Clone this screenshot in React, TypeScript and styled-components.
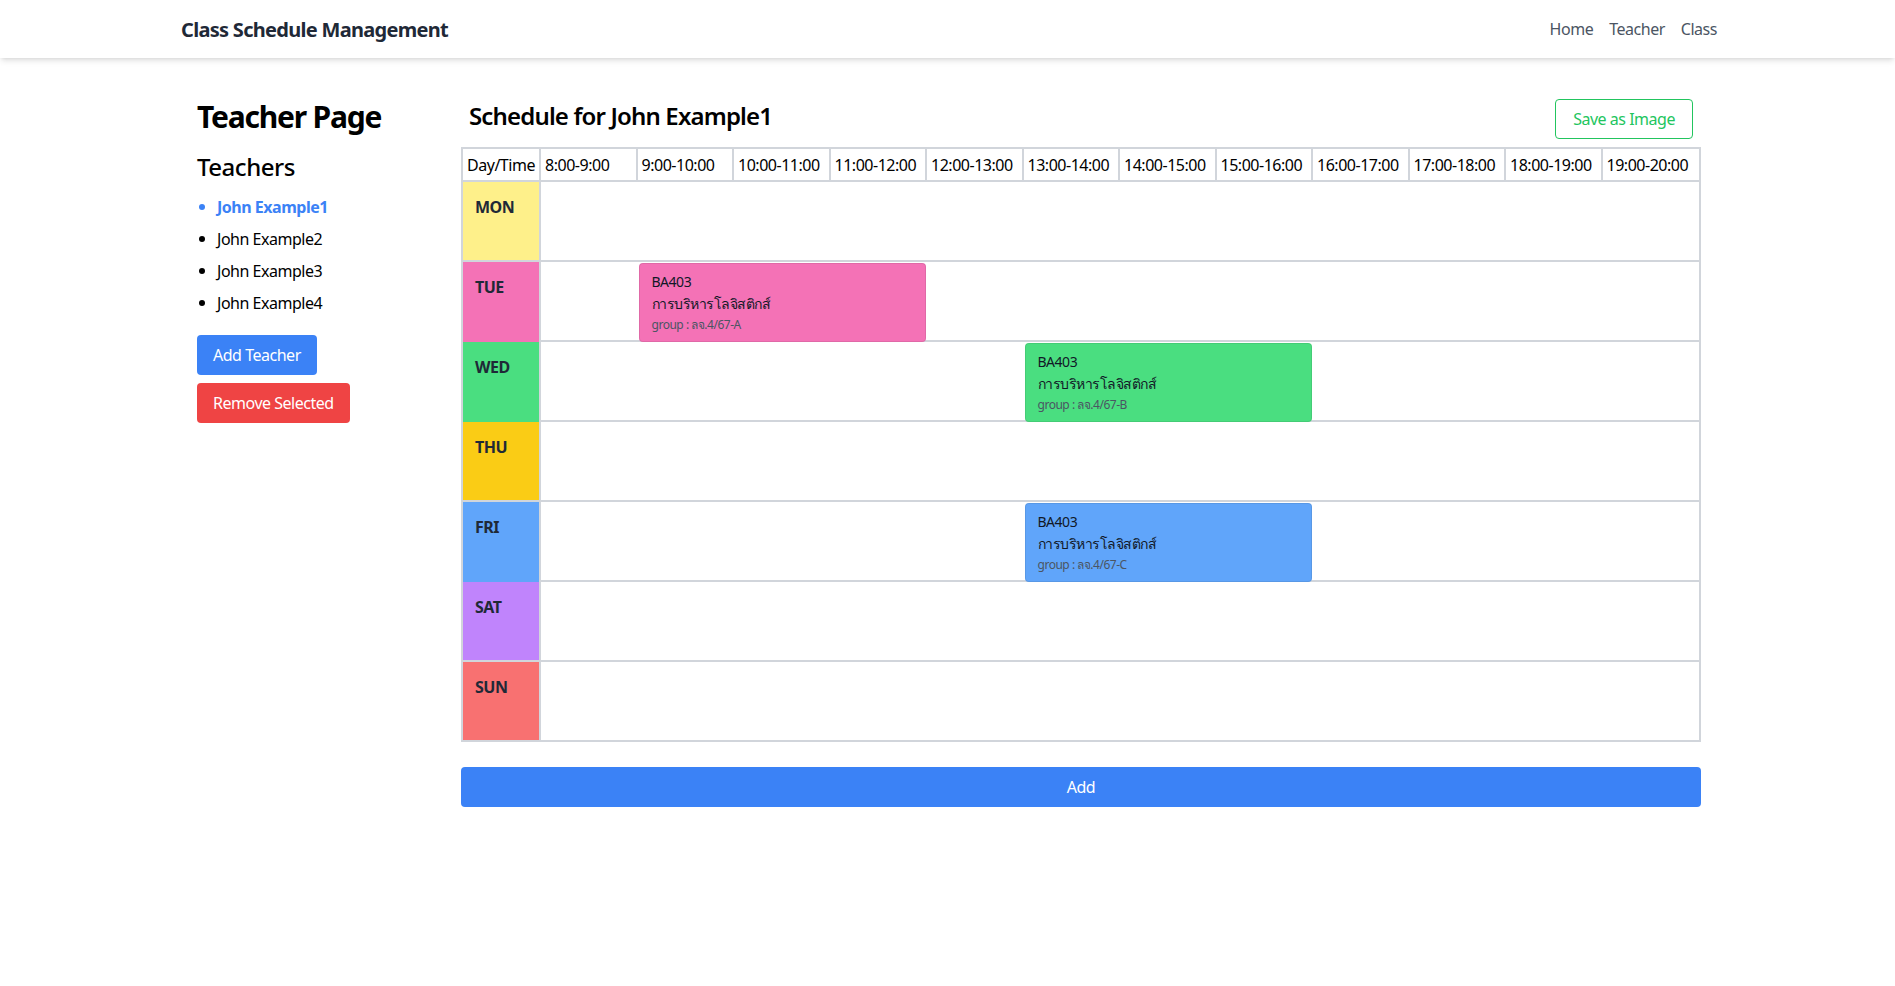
import styled, { createGlobalStyle } from "styled-components";

const GlobalStyle = createGlobalStyle`
  * { box-sizing: border-box; }
  body {
    margin: 0;
    padding-left: 3px;
    background: #ffffff;
    color: #000000;
    font-family: "Noto Sans", "Open Sans", "DejaVu Sans", sans-serif;
    letter-spacing: -0.03em;
  }
`

const Navbar = styled.header`
  margin-left: -3px;
  padding-left: 3px;
  background: #ffffff;
  box-shadow: 0 4px 6px -1px rgba(0, 0, 0, 0.1), 0 2px 4px -2px rgba(0, 0, 0, 0.1);
`

const NavInner = styled.div`
  max-width: 1536px;
  height: 58px;
  margin: 0 auto;
  display: flex;
  align-items: center;
  justify-content: space-between;
`

const Brand = styled.div`
  font-size: 20px;
  font-weight: 700;
  letter-spacing: -0.035em;
  color: #1f2937;
`

const NavLinks = styled.nav`
  display: flex;
  gap: 16px;
`

const NavLink = styled.a`
  font-size: 16px;
  color: #4b5563;
  text-decoration: none;
  cursor: pointer;
`

const Page = styled.main`
  max-width: 1536px;
  margin: 0 auto;
  padding: 41px 16px;
  display: flex;
`

const Sidebar = styled.aside`
  width: 264px;
  flex-shrink: 0;
`

const PageTitle = styled.h1`
  margin: 0 0 16px;
  font-size: 30px;
  line-height: 36px;
  font-weight: 700;
  letter-spacing: -0.04em;
`

const SectionTitle = styled.h2`
  margin: 0 0 8px;
  font-size: 24px;
  line-height: 32px;
  font-weight: 500;
`

const TeacherList = styled.ul`
  list-style: none;
  margin: 0 0 16px;
  padding: 0;
`

const TeacherItem = styled.li<{ $active?: boolean }>`
  display: flex;
  align-items: center;
  gap: 12px;
  padding: 4px 0 4px 2px;
  font-size: 16px;
  line-height: 24px;
  cursor: pointer;
  color: ${(p) => (p.$active ? "#3b82f6" : "#000000")};
  font-weight: ${(p) => (p.$active ? 700 : 400)};

  &::before {
    content: "";
    width: 6px;
    height: 6px;
    border-radius: 50%;
    background: currentColor;
  }
`

const ButtonStack = styled.div`
  display: flex;
  flex-direction: column;
  align-items: flex-start;
  gap: 8px;
`

const Button = styled.button<{ $color: string }>`
  border: none;
  border-radius: 4px;
  padding: 8px 16px;
  font-family: inherit;
  letter-spacing: inherit;
  font-size: 16px;
  line-height: 24px;
  color: #ffffff;
  background: ${(p) => p.$color};
  cursor: pointer;
`

const Main = styled.section`
  flex: 1;
  min-width: 0;
`

const MainHeader = styled.div`
  display: flex;
  align-items: center;
  justify-content: space-between;
  padding: 0 8px;
  margin-bottom: 8px;
`

const ScheduleTitle = styled.h2`
  margin: 0;
  padding-bottom: 6px;
  font-size: 24px;
  line-height: 32px;
  font-weight: 600;
  letter-spacing: -0.035em;
`

const OutlineButton = styled.button`
  background: #ffffff;
  border: 1px solid #22c55e;
  border-radius: 4px;
  padding: 7px 17px;
  font-family: inherit;
  letter-spacing: inherit;
  font-size: 16px;
  line-height: 24px;
  color: #22c55e;
  cursor: pointer;
`

const Table = styled.div`
  border: 2px solid #d1d5db;
`

const Row = styled.div<{ $header?: boolean }>`
  display: grid;
  grid-template-columns: 78px repeat(12, 1fr);
  height: ${(p) => (p.$header ? "33px" : "80px")};
  border-bottom: 2px solid #d1d5db;

  &:last-child {
    border-bottom: none;
    height: 78px;
  }
`

const HeadCell = styled.div`
  padding: 4px 4px 3px;
  font-size: 16px;
  line-height: 24px;
  white-space: nowrap;
  overflow: hidden;
  border-right: 2px solid #d1d5db;

  &:last-child {
    border-right: none;
  }
`

const DayCell = styled.div<{ $bg: string }>`
  grid-column: 1;
  background: ${(p) => p.$bg};
  border-right: 2px solid #d1d5db;
  padding: 13px 12px;
  font-size: 16px;
  line-height: 24px;
  font-weight: 700;
  color: #1f2937;
`

const ClassBlock = styled.div<{ $bg: string; $start: number; $span: number }>`
  grid-column: ${(p) => p.$start + 2} / span ${(p) => p.$span};
  grid-row: 1;
  margin: 1px;
  background: ${(p) => p.$bg};
  border: 1px solid rgba(0, 0, 0, 0.08);
  border-radius: 4px;
  padding: 8px 12px;
`

const ClassCode = styled.div`
  font-size: 14px;
  line-height: 20px;
  color: #111827;
`

const ClassName = styled.div`
  margin-top: 2px;
  font-size: 14px;
  line-height: 20px;
  font-weight: 500;
  color: #111827;
`

const ClassGroup = styled.div`
  margin-top: 3px;
  font-size: 12px;
  line-height: 16px;
  color: #4b5563;
`

const AddButton = styled(Button)`
  width: 100%;
  margin-top: 25px;
`

const times = [
  "8:00-9:00", "9:00-10:00", "10:00-11:00", "11:00-12:00", "12:00-13:00", "13:00-14:00",
  "14:00-15:00", "15:00-16:00", "16:00-17:00", "17:00-18:00", "18:00-19:00", "19:00-20:00",
];

const days = [
  { name: "MON", color: "#fef08a" },
  { name: "TUE", color: "#f472b6" },
  { name: "WED", color: "#4ade80" },
  { name: "THU", color: "#facc15" },
  { name: "FRI", color: "#60a5fa" },
  { name: "SAT", color: "#c084fc" },
  { name: "SUN", color: "#f87171" },
];

const classes = [
  { day: "TUE", start: 1, span: 3, code: "BA403", name: "การบริหารโลจิสติกส์", group: "ลจ.4/67-A" },
  { day: "WED", start: 5, span: 3, code: "BA403", name: "การบริหารโลจิสติกส์", group: "ลจ.4/67-B" },
  { day: "FRI", start: 5, span: 3, code: "BA403", name: "การบริหารโลจิสติกส์", group: "ลจ.4/67-C" },
];

const teachers = ["John Example1", "John Example2", "John Example3", "John Example4"];

const App = () => {
  return (
    <>
      <GlobalStyle />
      <Navbar>
        <NavInner>
          <Brand>Class Schedule Management</Brand>
          <NavLinks>
            <NavLink>Home</NavLink>
            <NavLink>Teacher</NavLink>
            <NavLink>Class</NavLink>
          </NavLinks>
        </NavInner>
      </Navbar>

      <Page>
        <Sidebar>
          <PageTitle>Teacher Page</PageTitle>
          <SectionTitle>Teachers</SectionTitle>
          <TeacherList>
            {teachers.map((t, i) => (
              <TeacherItem key={t} $active={i === 0}>{t}</TeacherItem>
            ))}
          </TeacherList>
          <ButtonStack>
            <Button $color="#3b82f6">Add Teacher</Button>
            <Button $color="#ef4444">Remove Selected</Button>
          </ButtonStack>
        </Sidebar>

        <Main>
          <MainHeader>
            <ScheduleTitle>Schedule for John Example1</ScheduleTitle>
            <OutlineButton>Save as Image</OutlineButton>
          </MainHeader>

          <Table>
            <Row $header>
              <HeadCell>Day/Time</HeadCell>
              {times.map((t) => (
                <HeadCell key={t}>{t}</HeadCell>
              ))}
            </Row>
            {days.map((d) => (
              <Row key={d.name}>
                <DayCell $bg={d.color}>{d.name}</DayCell>
                {classes.filter((c) => c.day === d.name).map((c) => (
                  <ClassBlock key={c.group} $bg={d.color} $start={c.start} $span={c.span}>
                    <ClassCode>{c.code}</ClassCode>
                    <ClassName>{c.name}</ClassName>
                    <ClassGroup>group : {c.group}</ClassGroup>
                  </ClassBlock>
                ))}
              </Row>
            ))}
          </Table>

          <AddButton $color="#3b82f6">Add</AddButton>
        </Main>
      </Page>
    </>
  );
}

export default App;
